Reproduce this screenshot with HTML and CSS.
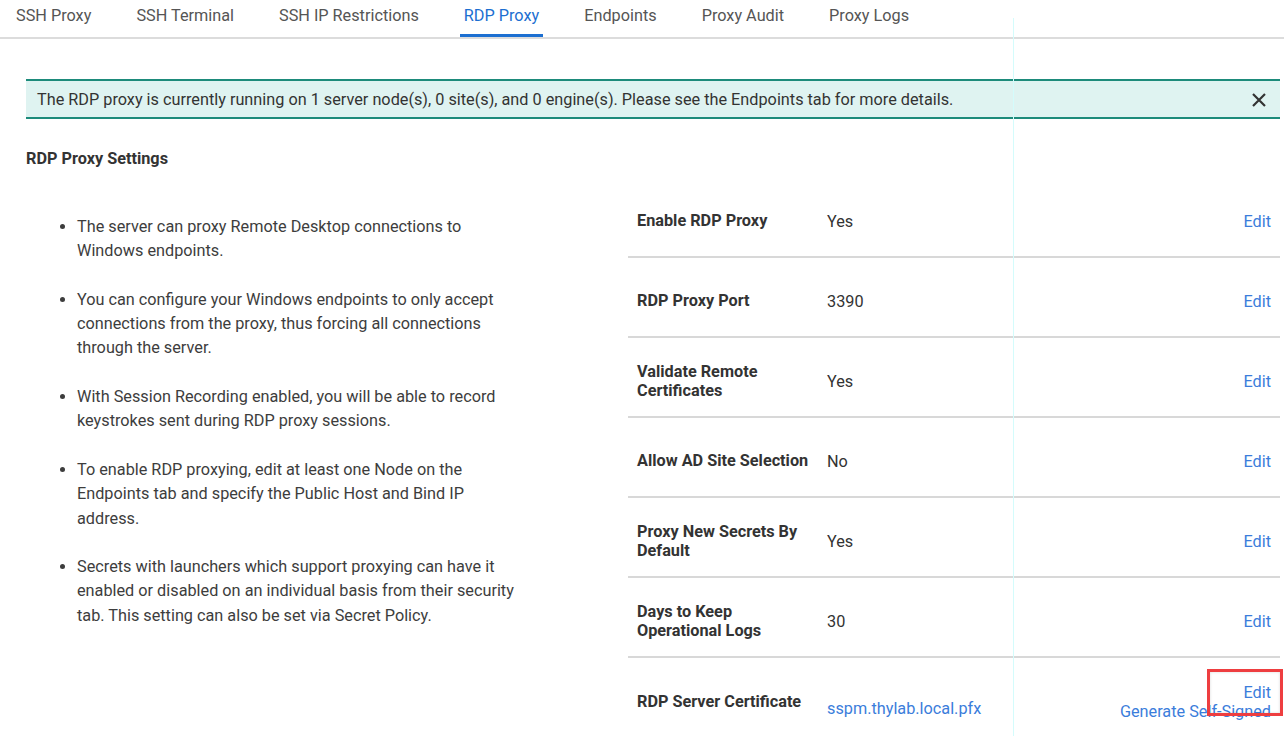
FILE: index.html
```html
<!DOCTYPE html>
<html lang="en">
<head>
<meta charset="utf-8">
<title>RDP Proxy</title>
<link rel="stylesheet" href="styles.css">
</head>
<body>
<nav class="tabs">
  <a class="tab">SSH Proxy</a>
  <a class="tab">SSH Terminal</a>
  <a class="tab">SSH IP Restrictions</a>
  <a class="tab active">RDP Proxy</a>
  <a class="tab">Endpoints</a>
  <a class="tab">Proxy Audit</a>
  <a class="tab">Proxy Logs</a>
</nav>
<main class="page">
  <div class="alert">
    <span class="alert-text">The RDP proxy is currently running on 1 server node(s), 0 site(s), and 0 engine(s). Please see the Endpoints tab for more details.</span>
    <button class="alert-close" aria-label="Close">
      <svg width="14" height="14" viewBox="0 0 14 14"><path d="M1 1 L13 13 M13 1 L1 13" stroke="#333" stroke-width="2.2" fill="none"/></svg>
    </button>
  </div>
  <h2 class="section-title">RDP Proxy Settings</h2>
  <div class="settings">
    <ul class="notes">
      <li>The server can proxy Remote Desktop connections to Windows endpoints.</li>
      <li>You can configure your Windows endpoints to only accept connections from the proxy, thus forcing all connections through the server.</li>
      <li>With Session Recording enabled, you will be able to record keystrokes sent during RDP proxy sessions.</li>
      <li>To enable RDP proxying, edit at least one Node on the Endpoints tab and specify the Public Host and Bind IP address.</li>
      <li>Secrets with launchers which support proxying can have it enabled or disabled on an individual basis from their security tab. This setting can also be set via Secret Policy.</li>
    </ul>
    <div class="table">
      <div class="row"><div class="label">Enable RDP Proxy</div><div class="value">Yes</div><div class="actions"><a class="link">Edit</a></div></div>
      <div class="row"><div class="label">RDP Proxy Port</div><div class="value">3390</div><div class="actions"><a class="link">Edit</a></div></div>
      <div class="row"><div class="label">Validate Remote Certificates</div><div class="value">Yes</div><div class="actions"><a class="link">Edit</a></div></div>
      <div class="row"><div class="label">Allow AD Site Selection</div><div class="value">No</div><div class="actions"><a class="link">Edit</a></div></div>
      <div class="row"><div class="label">Proxy New Secrets By Default</div><div class="value">Yes</div><div class="actions"><a class="link">Edit</a></div></div>
      <div class="row"><div class="label">Days to Keep Operational Logs</div><div class="value">30</div><div class="actions"><a class="link">Edit</a></div></div>
      <div class="row last"><div class="label">RDP Server Certificate</div><div class="value cert"><a class="link">sspm.thylab.local.pfx</a></div><div class="actions stacked"><a class="link highlighted">Edit</a><a class="link">Generate Self-Signed</a></div></div>
    </div>
  </div>
  <div class="guide-line"></div>
</main>
</body>
</html>
```

FILE: styles.css
```css
* { box-sizing: border-box; }
html, body { margin: 0; padding: 0; background: #fff; }
body {
  font-family: Roboto, "Liberation Sans", Arial, sans-serif;
  font-size: 16.25px;
  color: #333;
  width: 1284px;
  height: 736px;
  overflow: hidden;
  position: relative;
}

.tabs {
  display: flex;
  gap: 37px;
  padding-left: 12px;
  border-bottom: 2px solid #dcdcdc;
  height: 39px;
}
.tab {
  display: block;
  padding: 7px 4px 9px;
  line-height: 18px;
  color: #555;
  border-bottom: 3px solid transparent;
  height: 37px;
  cursor: pointer;
}
.tab.active {
  color: #1c6fd1;
  border-bottom-color: #1c6fd1;
}

.page {
  padding: 40px 4px 0 26px;
}

.alert {
  display: flex;
  align-items: center;
  justify-content: space-between;
  height: 40px;
  padding: 2px 14px 0 11px;
  background: #dff3f1;
  border-top: 2px solid #1d8b7b;
  border-bottom: 2px solid #1d8b7b;
}
.alert-text { line-height: 18px; color: #333; }
.alert-close {
  border: 0;
  background: none;
  padding: 0;
  width: 14px;
  height: 14px;
  display: flex;
  cursor: pointer;
}

.section-title {
  margin: 31px 0 0;
  font-size: 16.25px;
  font-weight: 700;
  line-height: 18px;
  color: #333;
}

.settings {
  display: grid;
  grid-template-columns: 602px 1fr;
  margin-top: 10px;
}

.notes {
  margin: 0;
  padding: 37px 0 0 51px;
  width: 495px;
  line-height: 24.3px;
  color: #3d3d3d;
}
.notes li { margin-bottom: 24.3px; }

.table { display: flex; flex-direction: column; }
.row {
  display: grid;
  grid-template-columns: 178px 1fr auto;
  column-gap: 12px;
  align-items: center;
  height: 80px;
  padding: 9px 9px 0;
  border-bottom: 2px solid #d8d8d8;
}
.row.last { border-bottom: 0; padding-top: 10px; height: 78px; }
.label {
  font-weight: 700;
  line-height: 18.5px;
  color: #333;
}
.value { line-height: 18px; color: #333; }
.value.cert { padding-top: 14px; }
.link { color: #3b7ddb; cursor: pointer; line-height: 18px; }
.actions { display: flex; flex-direction: column; align-items: flex-end; }
.actions.stacked { gap: 1px; }
.highlighted { position: relative; }
.highlighted::after {
  content: "";
  position: absolute;
  right: -12px;
  top: -15px;
  width: 70px;
  height: 41px;
  border: 3px solid #ee3e40;
  box-shadow: inset 0 0 3px rgba(0, 0, 0, 0.15);
}

.guide-line {
  position: absolute;
  left: 1013px;
  top: 18px;
  bottom: 0;
  width: 1px;
  background: #d4fcfc;
}
```
